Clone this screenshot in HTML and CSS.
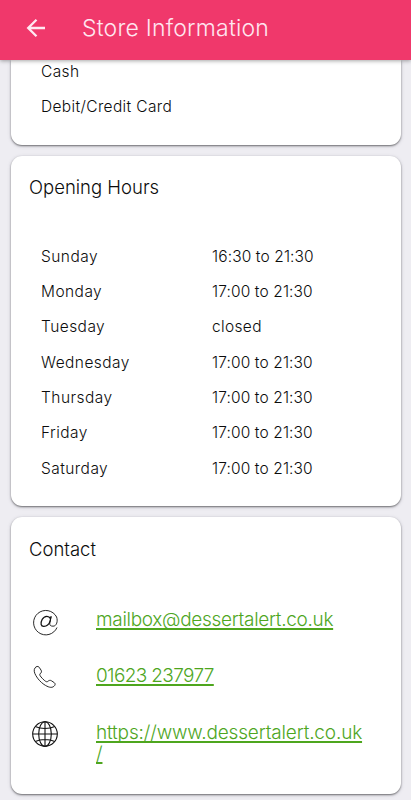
FILE: index.html
```html
<!DOCTYPE html>
<html lang="en">
<head>
<meta charset="utf-8">
<meta name="viewport" content="width=device-width, initial-scale=1">
<title>Store Information</title>
<link rel="stylesheet" href="styles.css">
</head>
<body>
<header class="bar">
  <svg class="back" viewBox="0 0 20 20" width="20" height="20"><path d="M19 10H2.500M10.500 1.700L2.200 10l8.300 8.300"/></svg>
  <h1 class="title">Store Information</h1>
</header>
<main class="page">
  <section class="card payments">
    <div class="row"><span>Cash</span></div>
    <div class="row"><span>Debit/Credit Card</span></div>
  </section>
  <section class="card hours">
    <h2 class="heading">Opening Hours</h2>
    <div class="rows">
      <div class="row day"><span>Sunday</span><span class="time">16:30 to 21:30</span></div>
      <div class="row day"><span>Monday</span><span class="time">17:00 to 21:30</span></div>
      <div class="row day"><span>Tuesday</span><span class="time closed">closed</span></div>
      <div class="row day"><span>Wednesday</span><span class="time">17:00 to 21:30</span></div>
      <div class="row day"><span>Thursday</span><span class="time">17:00 to 21:30</span></div>
      <div class="row day"><span>Friday</span><span class="time">17:00 to 21:30</span></div>
      <div class="row day"><span>Saturday</span><span class="time">17:00 to 21:30</span></div>
    </div>
  </section>
  <section class="card contact">
    <h2 class="heading">Contact</h2>
    <div class="entries">
      <div class="entry">
        <svg class="icon" viewBox="0 0 26 26" width="26" height="26"><path d="M25 19.500A12.200 12.200 0 1 1 24.600 9C26 13 24.800 18.200 21 18.200C18.500 18.200 17.400 17 17.800 15L19.100 8.300"/><path class="bold" d="M18.200 10.500C17.300 7.800 12.600 7.300 10.200 11.400C8 15.500 9 18.600 11.900 18.400C15 18.200 17.300 15.400 18 13.500L19.100 8.300"/></svg>
        <a class="mail" href="mailto:mailbox@dessertalert.co.uk">mailbox@dessertalert.co.uk</a>
      </div>
      <div class="entry">
        <svg class="icon" viewBox="0 0 26 26" width="26" height="26"><path d="M3 3.900C4.200 2.300 6 1.900 7.100 3.200L9.100 6.200C9.900 7.700 9.400 8.600 8 9.900C7.300 10.900 8.100 12.100 10.600 14.700C13.100 17.200 14.500 18.200 15.500 17.600C17 16.300 18.100 15.900 19.500 16.800L22.300 18.700C23.600 19.700 23.300 21.200 21.800 22.400C19.400 24.300 16.100 23.200 11.900 20.400C8.500 18 6 15.200 3.900 11.600C2 8.300 1.700 5.900 3 3.900Z"/></svg>
        <a class="phone" href="tel:01623237977">01623 237977</a>
      </div>
      <div class="entry">
        <svg class="icon globe" viewBox="0 0 26 26" width="26" height="26"><circle cx="13" cy="13" r="12.300"/><ellipse cx="13" cy="13" rx="6.300" ry="12.300"/><path d="M13 .7v24.600M.7 13h24.600M3.300 5.500C8.500 8.100 17.500 8.100 22.700 5.500M3.300 20.500C8.500 17.900 17.500 17.900 22.700 20.500"/></svg>
        <a class="web" href="https://www.dessertalert.co.uk/">https://www.dessertalert.co.uk<br>/</a>
      </div>
    </div>
  </section>
</main>
</body>
</html>
```
FILE: styles.css
```css
* { box-sizing: border-box; }
body {
  margin: 0;
  height: 800px;
  overflow: hidden;
  background: #eeedf2;
  color: #0c0c0c;
  font-family: Inter, "Liberation Sans", sans-serif;
  font-weight: 300;
}
.bar {
  position: relative;
  z-index: 1;
  display: flex;
  align-items: center;
  height: 60px;
  padding: 0 0 4px 26px;
  background: #f0386b;
  box-shadow: 0 1px 4px rgba(0, 0, 0, .35);
}
.back { fill: none; stroke: #ffe9f2; stroke-width: 2.3; }
.title {
  margin: 0 0 0 36px;
  color: #ffe6f0;
  font-size: 23px;
  font-weight: 300;
  letter-spacing: .2px;
}
.page { display: flex; flex-direction: column; gap: 11px; padding: 0 10px 0 11px; }
.card {
  background: #fff;
  border-radius: 11px;
  box-shadow: 0 1px 2px rgba(0, 0, 0, .5), 0 1px 4px rgba(60, 60, 90, .16);
}
.payments { height: 85px; padding: 0 30px; border-radius: 0 0 11px 11px; }
.payments .row:first-child { margin-top: -6.500px; }
.hours { height: 350px; }
.contact { height: 277px; }
.heading {
  margin: 0;
  padding: 19px 18px 0;
  font-size: 18.500px;
  line-height: 25px;
  font-weight: 300;
}
.contact .heading { padding-top: 20px; }
.rows { padding: 38.500px 30px 0; }
.row {
  display: grid;
  grid-template-columns: 171px 1fr;
  align-items: center;
  height: 35.350px;
  font-size: 15.500px;
  letter-spacing: .36px;
}
.day { letter-spacing: .45px; }
.time { letter-spacing: .12px; }
.closed { letter-spacing: .35px; }
.row span { white-space: nowrap; }
.entries { padding: 46px 21px 0; }
.entry { display: flex; gap: 38px; height: 56.400px; }
.icon { flex: none; fill: none; stroke: #111; stroke-width: .9; overflow: visible; }
.icon .bold { stroke-width: 1.200; }
.globe { stroke-width: 1.100; }
.entry a {
  padding-top: 1px;
  color: #4ea61e;
  font-size: 19px;
  line-height: 21.500px;
  white-space: nowrap;
  text-decoration: underline;
  text-decoration-thickness: 1.500px;
  text-underline-offset: 1.500px;
  text-decoration-skip-ink: none;
}
.entry .mail { letter-spacing: -.31px; }
.entry .phone { letter-spacing: -.64px; }
.entry .web { letter-spacing: -.16px; }
```
